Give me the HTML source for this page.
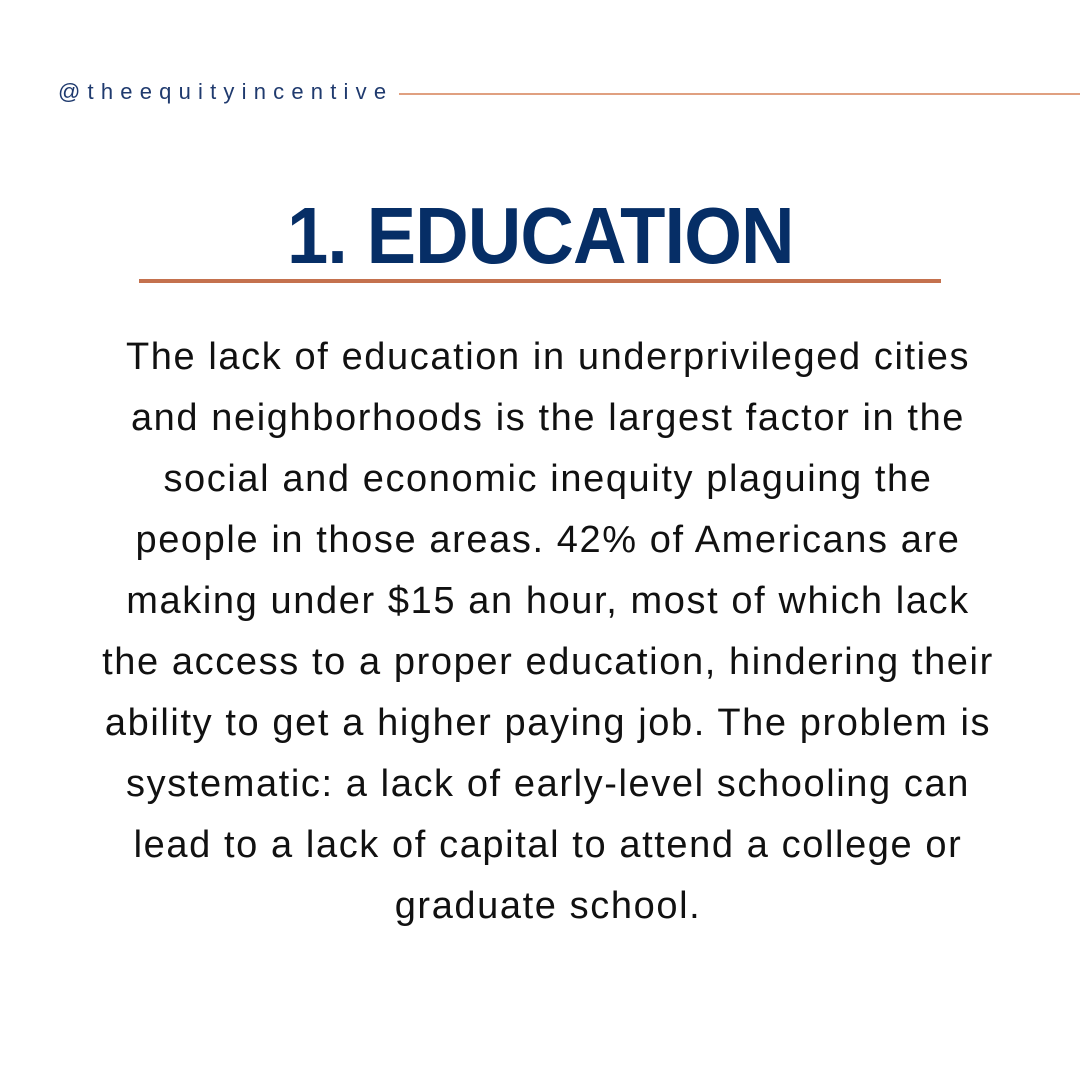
<!DOCTYPE html>
<html><head><meta charset="utf-8"><style>
html,body{margin:0;padding:0;background:#fff;}
body{width:1080px;height:1080px;position:relative;overflow:hidden;font-family:"Liberation Sans",sans-serif;}
.handle{position:absolute;left:58px;top:79px;font-size:22px;letter-spacing:7.2px;color:#1f3a6e;white-space:nowrap;}
.hline{position:absolute;left:399px;top:93px;width:681px;height:2px;background:#e0a080;}
.title{position:absolute;left:0;width:1080px;top:186px;text-align:center;font-weight:bold;font-size:80px;color:#062e66;line-height:100px;}
.title span{display:inline-block;transform:scaleX(0.927);letter-spacing:-1px;}
.uline{position:absolute;left:139px;top:279px;width:802px;height:4px;background:#c4714e;}
.body{position:absolute;left:8px;width:1080px;top:327px;text-align:center;font-size:38px;letter-spacing:1.6px;line-height:61px;color:#111;}
</style></head><body>
<div class="handle">@theequityincentive</div>
<div class="hline"></div>
<div class="title"><span>1. EDUCATION</span></div>
<div class="uline"></div>
<div class="body">The lack of education in underprivileged cities<br>and neighborhoods is the largest factor in the<br>social and economic inequity plaguing the<br>people in those areas. 42% of Americans are<br>making under $15 an hour, most of which lack<br>the access to a proper education, hindering their<br>ability to get a higher paying job. The problem is<br>systematic: a lack of early-level schooling can<br>lead to a lack of capital to attend a college or<br>graduate school.</div>
</body></html>
